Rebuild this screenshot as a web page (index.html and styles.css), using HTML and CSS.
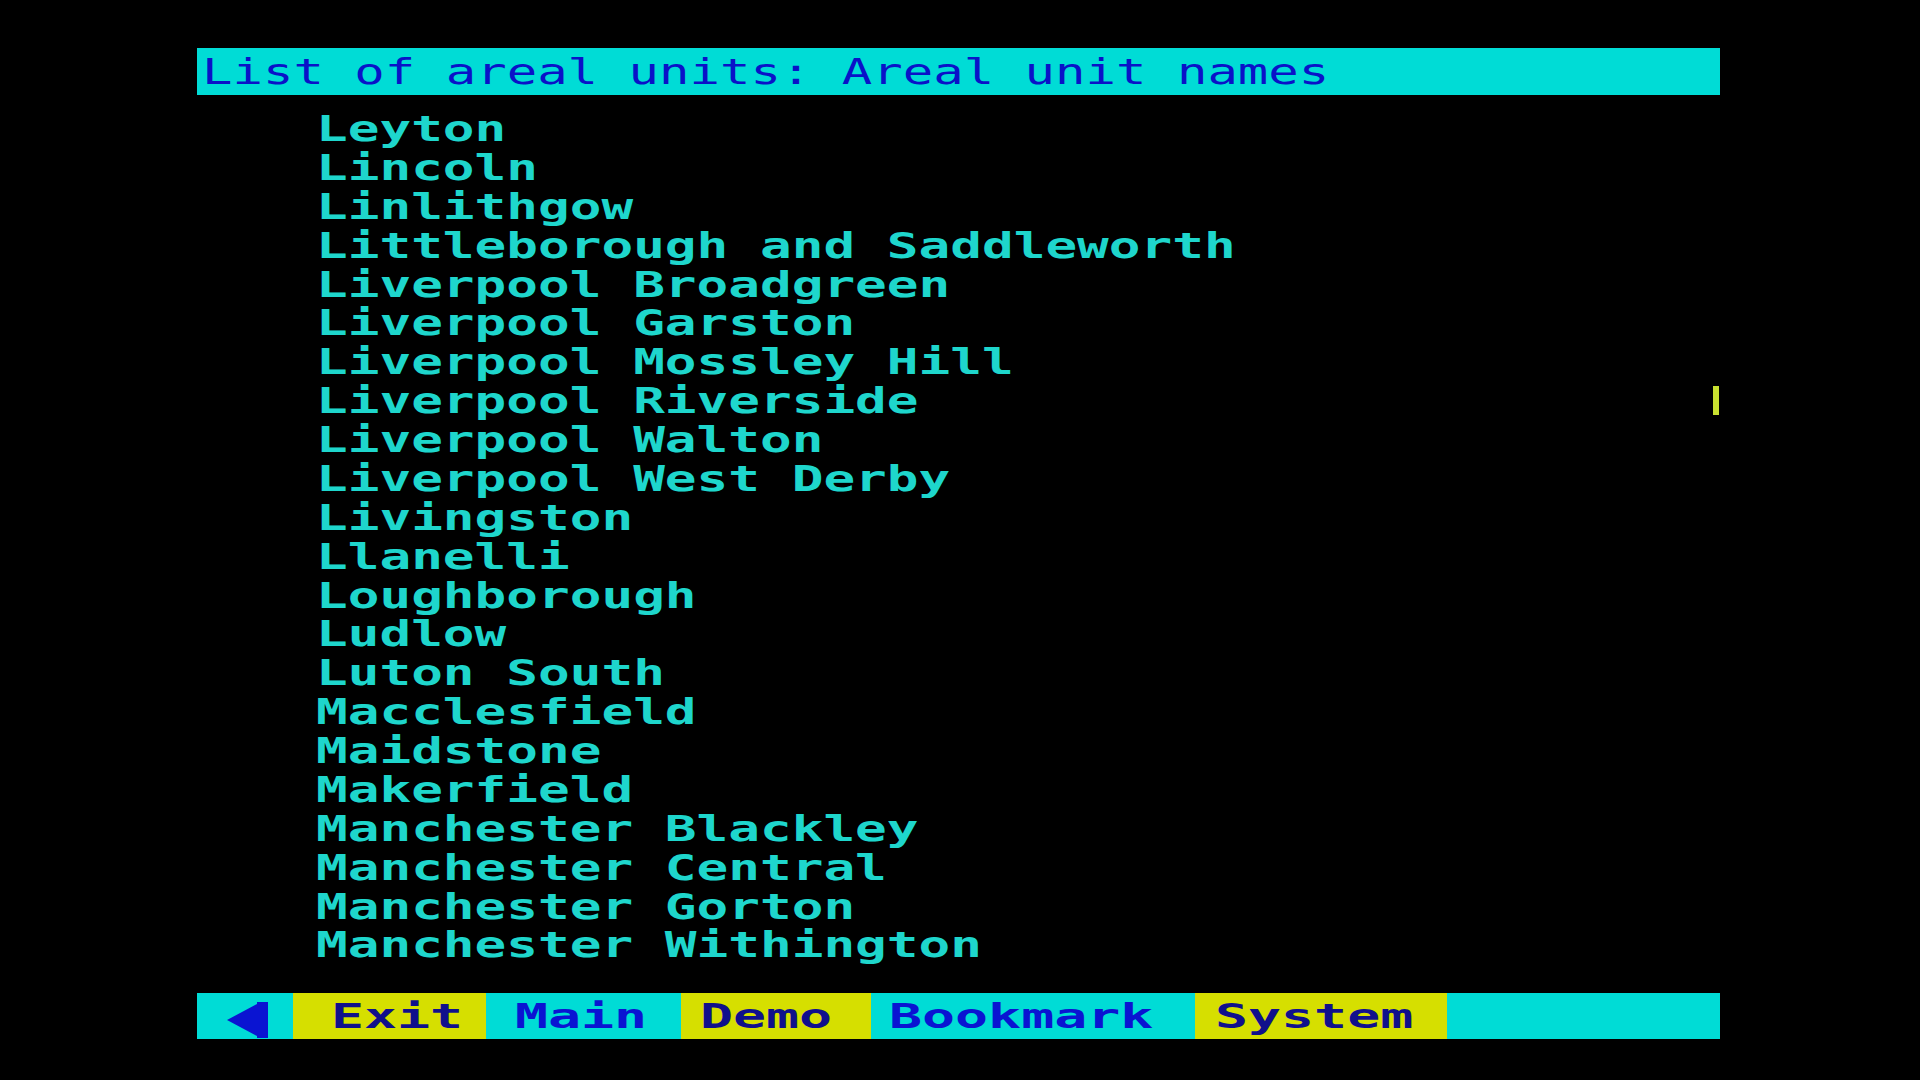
FILE: index.html
```html
<!DOCTYPE html>
<html>
<head>
<meta charset="utf-8">
<link rel="stylesheet" href="styles.css">
</head>
<body>
<div class="screen">
  <div class="titlebar"><span class="title-text">List of areal units: Areal unit names</span></div>
  <ul class="list">
    <li><span class="item">Leyton</span></li>
    <li><span class="item">Lincoln</span></li>
    <li><span class="item">Linlithgow</span></li>
    <li><span class="item">Littleborough and Saddleworth</span></li>
    <li><span class="item">Liverpool Broadgreen</span></li>
    <li><span class="item">Liverpool Garston</span></li>
    <li><span class="item">Liverpool Mossley Hill</span></li>
    <li><span class="item">Liverpool Riverside</span></li>
    <li><span class="item">Liverpool Walton</span></li>
    <li><span class="item">Liverpool West Derby</span></li>
    <li><span class="item">Livingston</span></li>
    <li><span class="item">Llanelli</span></li>
    <li><span class="item">Loughborough</span></li>
    <li><span class="item">Ludlow</span></li>
    <li><span class="item">Luton South</span></li>
    <li><span class="item">Macclesfield</span></li>
    <li><span class="item">Maidstone</span></li>
    <li><span class="item">Makerfield</span></li>
    <li><span class="item">Manchester Blackley</span></li>
    <li><span class="item">Manchester Central</span></li>
    <li><span class="item">Manchester Gorton</span></li>
    <li><span class="item">Manchester Withington</span></li>
  </ul>
  <div class="cursor"></div>
  <div class="menubar">
    <div class="cell cyan back">
      <svg class="arrow" width="42" height="36" viewBox="0 0 42 36"><polygon points="0,18 30,2 30,0 41,0 41,36 30,36 30,34" fill="#0a14d2"/></svg>
    </div>
    <div class="cell yellow exit"><span class="btn">Exit</span></div>
    <div class="cell cyan main"><span class="btn">Main</span></div>
    <div class="cell yellow demo"><span class="btn">Demo</span></div>
    <div class="cell cyan bookmark"><span class="btn">Bookmark</span></div>
    <div class="cell yellow system"><span class="btn">System</span></div>
    <div class="cell cyan rest"></div>
  </div>
</div>
</body>
</html>
```

FILE: styles.css
```css
html, body {
  margin: 0;
  padding: 0;
  background: #000;
}
body {
  width: 1920px;
  height: 1080px;
  overflow: hidden;
  font-family: "DejaVu Sans Mono", "Liberation Mono", monospace;
}
.screen {
  position: relative;
  width: 1523px;
  margin-left: 197px;
  padding-top: 48px;
}
.titlebar {
  height: 47px;
  background: #00dcd6;
  line-height: 47px;
  padding-left: 5px;
  white-space: pre;
  overflow: hidden;
}
.title-text {
  display: inline-block;
  font-size: 35.7px;
  font-weight: normal;
  color: #0a12c8;
  transform: scaleX(1.418);
  transform-origin: left center;
}
.list {
  list-style: none;
  margin: 15px 0 0 0;
  padding: 0 0 0 119px;
  height: 854px;
}
.list li {
  height: 38.88px;
  line-height: 38.88px;
  white-space: pre;
}
.item {
  display: inline-block;
  font-size: 35px;
  font-weight: bold;
  color: #1ed6cc;
  transform: scaleX(1.505);
  transform-origin: left center;
}
.cursor {
  position: absolute;
  left: 1516px;
  top: 386px;
  width: 6px;
  height: 29px;
  background: #c8e030;
}
.menubar {
  display: flex;
  height: 46px;
  margin-top: 29px;
}
.cell {
  height: 46px;
  line-height: 46px;
  white-space: pre;
  box-sizing: border-box;
}
.cyan { background: #00dcd6; }
.yellow { background: #d6df00; }
.back { width: 96px; display: flex; align-items: center; padding-left: 30px; }
.arrow { display: block; margin-top: 7px; }
.exit { width: 193px; padding-left: 38px; }
.main { width: 195px; padding-left: 29px; }
.demo { width: 190px; padding-left: 19px; }
.bookmark { width: 324px; padding-left: 18px; }
.system { width: 252px; padding-left: 20px; }
.rest { flex: 1; }
.btn {
  display: inline-block;
  font-size: 34.3px;
  font-weight: bold;
  transform: scaleX(1.6);
  transform-origin: left center;
}
.cyan .btn { color: #0a14d2; }
.yellow .btn { color: #10108c; }
```
